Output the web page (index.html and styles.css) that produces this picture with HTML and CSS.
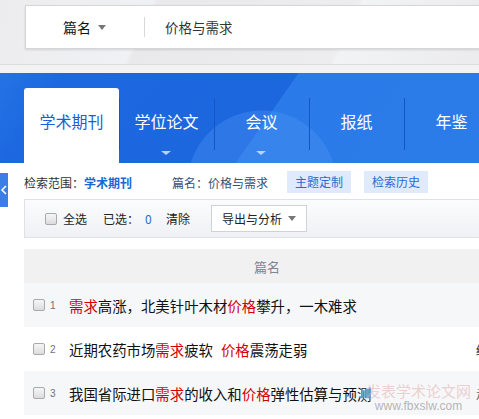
FILE: index.html
```html
<!DOCTYPE html>
<html lang="zh-CN">
<head>
<meta charset="utf-8">
<title>检索</title>
<link rel="stylesheet" href="styles.css">
</head>
<body>
<div class="page">
  <div class="top">
    <div class="search">
      <div class="field">篇名<span class="caret"></span></div>
      <div class="sep"></div>
      <div class="query">价格与需求</div>
    </div>
  </div>
  <div class="nav">
    <div class="tab active">学术期刊</div>
    <div class="tab">学位论文<span class="tri"></span></div>
    <div class="tab">会议<span class="tri"></span></div>
    <div class="tab">报纸</div>
    <div class="tab">年鉴</div>
  </div>
  <div class="side-tab"><svg width="8" height="12" viewBox="0 0 8 12"><path d="M6 2 L2 6 L6 10" fill="none" stroke="#fff" stroke-width="1.6"/></svg></div>
  <div class="main">
    <div class="filter">
      <span class="label">检索范围：<b class="scope">学术期刊</b></span>
      <span class="cond">篇名：价格与需求</span>
      <span class="chip">主题定制</span>
      <span class="chip">检索历史</span>
    </div>
    <div class="toolbar">
      <span class="check"></span>
      <span class="tool-txt all">全选</span>
      <span class="tool-txt sel">已选：</span>
      <span class="count">0</span>
      <span class="tool-txt clear">清除</span>
      <span class="export">导出与分析<span class="caret"></span></span>
    </div>
    <div class="thead"><div class="th-title">篇名</div></div>
    <div class="row odd">
      <span class="check small"></span><span class="num">1</span>
      <span class="title"><em>需求</em>高涨，北美针叶木材<em>价格</em>攀升，一木难求</span>
    </div>
    <div class="row">
      <span class="check small"></span><span class="num">2</span>
      <span class="title">近期农药市场<em>需求</em>疲软<em class="gap">价格</em>震荡走弱</span>
      <span class="src dark">经</span>
    </div>
    <div class="row odd">
      <span class="check small"></span><span class="num">3</span>
      <span class="title">我国省际进口<em>需求</em>的收入和<em>价格</em>弹性估算与预测</span>
      <span class="src">走</span>
    </div>
  </div>
  <div class="watermark">
    <div class="wm-cn">发表学术论文网</div>
    <div class="wm-en">www.fbxslw.com</div>
  </div>
</div>
</body>
</html>
```
FILE: styles.css
```css
* { box-sizing: border-box; }
html, body { margin: 0; padding: 0; }
body {
  width: 479px;
  height: 419px;
  overflow: hidden;
  background: #fff;
  font-family: "Noto Sans CJK SC", "Liberation Sans", sans-serif;
  color: #222;
}
.page { position: relative; width: 479px; height: 419px; overflow: hidden; }

.top {
  height: 73px;
  padding: 5px 0 0 25px;
  background:
    linear-gradient(to bottom, transparent 64px, #dcdcde 64px, #dcdcde 65px, #f3f3f4 65px),
    linear-gradient(115deg, #ececee 0%, #f0f1f4 30%, #e9e9eb 31%, #ededef 70%, #f2f3f5 71%, #ebebed 100%);
}
.search {
  height: 44px;
  width: 470px;
  background: #fff;
  border: 1px solid #d6d6d8;
  border-right: none;
  box-shadow: 0 1px 2px rgba(0,0,0,0.12);
  display: flex;
  align-items: center;
  font-size: 14px;
}
.field {
  width: 118px;
  padding-left: 37px;
  display: flex;
  align-items: center;
  color: #111;
}
.caret {
  display: inline-block;
  width: 0; height: 0;
  border-left: 4px solid transparent;
  border-right: 4px solid transparent;
  border-top: 5px solid #777;
  margin-left: 7px;
}
.sep { width: 1px; height: 20px; background: #d8d8d8; }
.query { padding-left: 20px; color: #333; font-size: 13.5px; }

.nav {
  height: 90px;
  padding-left: 24px;
  display: flex;
  align-items: flex-end;
  background:
    radial-gradient(circle at 262px 112px, rgba(80,150,245,0.35) 0, rgba(80,150,245,0.35) 74px, transparent 75px),
    linear-gradient(125deg, #2473e6 0%, #1d68e0 12%, #1c66de 55%, #2a7ae9 55.2%, #2b7be9 100%);
}
.tab {
  position: relative;
  flex: none;
  width: 95px;
  height: 75px;
  padding-top: 22px;
  line-height: 22px;
  text-align: center;
  color: #fff;
  font-size: 16px;
}
.tab + .tab::before {
  content: "";
  position: absolute;
  left: 0; top: 10px;
  width: 1px; height: 52px;
  background: #1456c6;
}
.tab.active {
  background: #fff;
  color: #1a5fd6;
  border-radius: 3px 3px 0 0;
}
.tri {
  position: absolute;
  left: 42px; bottom: 8px;
  width: 0; height: 0;
  border-left: 5px solid transparent;
  border-right: 5px solid transparent;
  border-top: 4px solid #b9d2f7;
}

.side-tab {
  position: absolute;
  left: 0; top: 173px;
  width: 8px; height: 34px;
  background: #3b7ee6;
  display: flex;
  align-items: center;
  justify-content: center;
}

.main { padding-left: 24px; }
.filter {
  height: 22px;
  margin-top: 8px;
  display: flex;
  align-items: center;
  font-size: 12px;
  color: #333;
}
.label { width: 148px; }
.scope { color: #1a66d6; font-weight: bold; }
.cond { width: 115px; color: #3a4f77; }
.chip {
  height: 22px;
  line-height: 22px;
  width: 64px;
  text-align: center;
  background: #dfeafc;
  color: #2a6bd0;
  margin-right: 13px;
}

.toolbar {
  margin-top: 6px;
  width: 470px;
  height: 39px;
  border: 1px solid #dee1e6;
  border-right: none;
  background: linear-gradient(#fbfcfd, #eff1f4);
  display: flex;
  align-items: center;
  padding-left: 20px;
  font-size: 12px;
  color: #222;
}
.check {
  width: 12px; height: 12px;
  border: 1px solid #a9a9ad;
  border-radius: 2px;
  background: linear-gradient(#f6f6f6, #dcdcdc);
  flex: none;
}
.all { margin-left: 6px; width: 40px; }
.sel { width: 42px; }
.count { color: #2a6bd0; width: 21px; }
.clear { width: 45px; }
.export {
  height: 27px;
  width: 96px;
  background: #fff;
  border: 1px solid #cfd2d7;
  display: flex;
  align-items: center;
  padding-left: 10px;
  color: #222;
}
.export .caret { margin-left: 6px; }

.thead {
  margin-top: 11px;
  height: 34px;
  background: #f1f1f1;
  width: 470px;
  display: flex;
  align-items: center;
}
.th-title { flex: none; width: 486px; text-align: center; color: #7d8594; font-size: 13px; }

.row {
  height: 44px;
  width: 470px;
  display: flex;
  align-items: center;
  padding-left: 9px;
  font-size: 14.4px;
  color: #111;
  position: relative;
}
.row.odd { background: #f6f7f9; }
.check.small { width: 12px; height: 12px; }
.num { width: 24px; padding-left: 5px; font-size: 10px; color: #6a7284; font-family: "Liberation Sans", sans-serif; }
.title { white-space: nowrap; }
.title em { font-style: normal; color: #d10000; }
.title em.gap { margin-left: 8px; }
.src {
  position: absolute;
  left: 452px;
  font-size: 12px;
  color: #666;
}
.src.dark { color: #222; }

.watermark {
  position: absolute;
  left: 366px; top: 382px;
  text-align: center;
  pointer-events: none;
}
.wm-cn { font-size: 15px; line-height: 17px; color: rgba(225,175,175,0.55); }
.wm-en { font-size: 12px; line-height: 14px; color: rgba(110,110,110,0.5); font-family: "Liberation Sans", sans-serif; }
```
